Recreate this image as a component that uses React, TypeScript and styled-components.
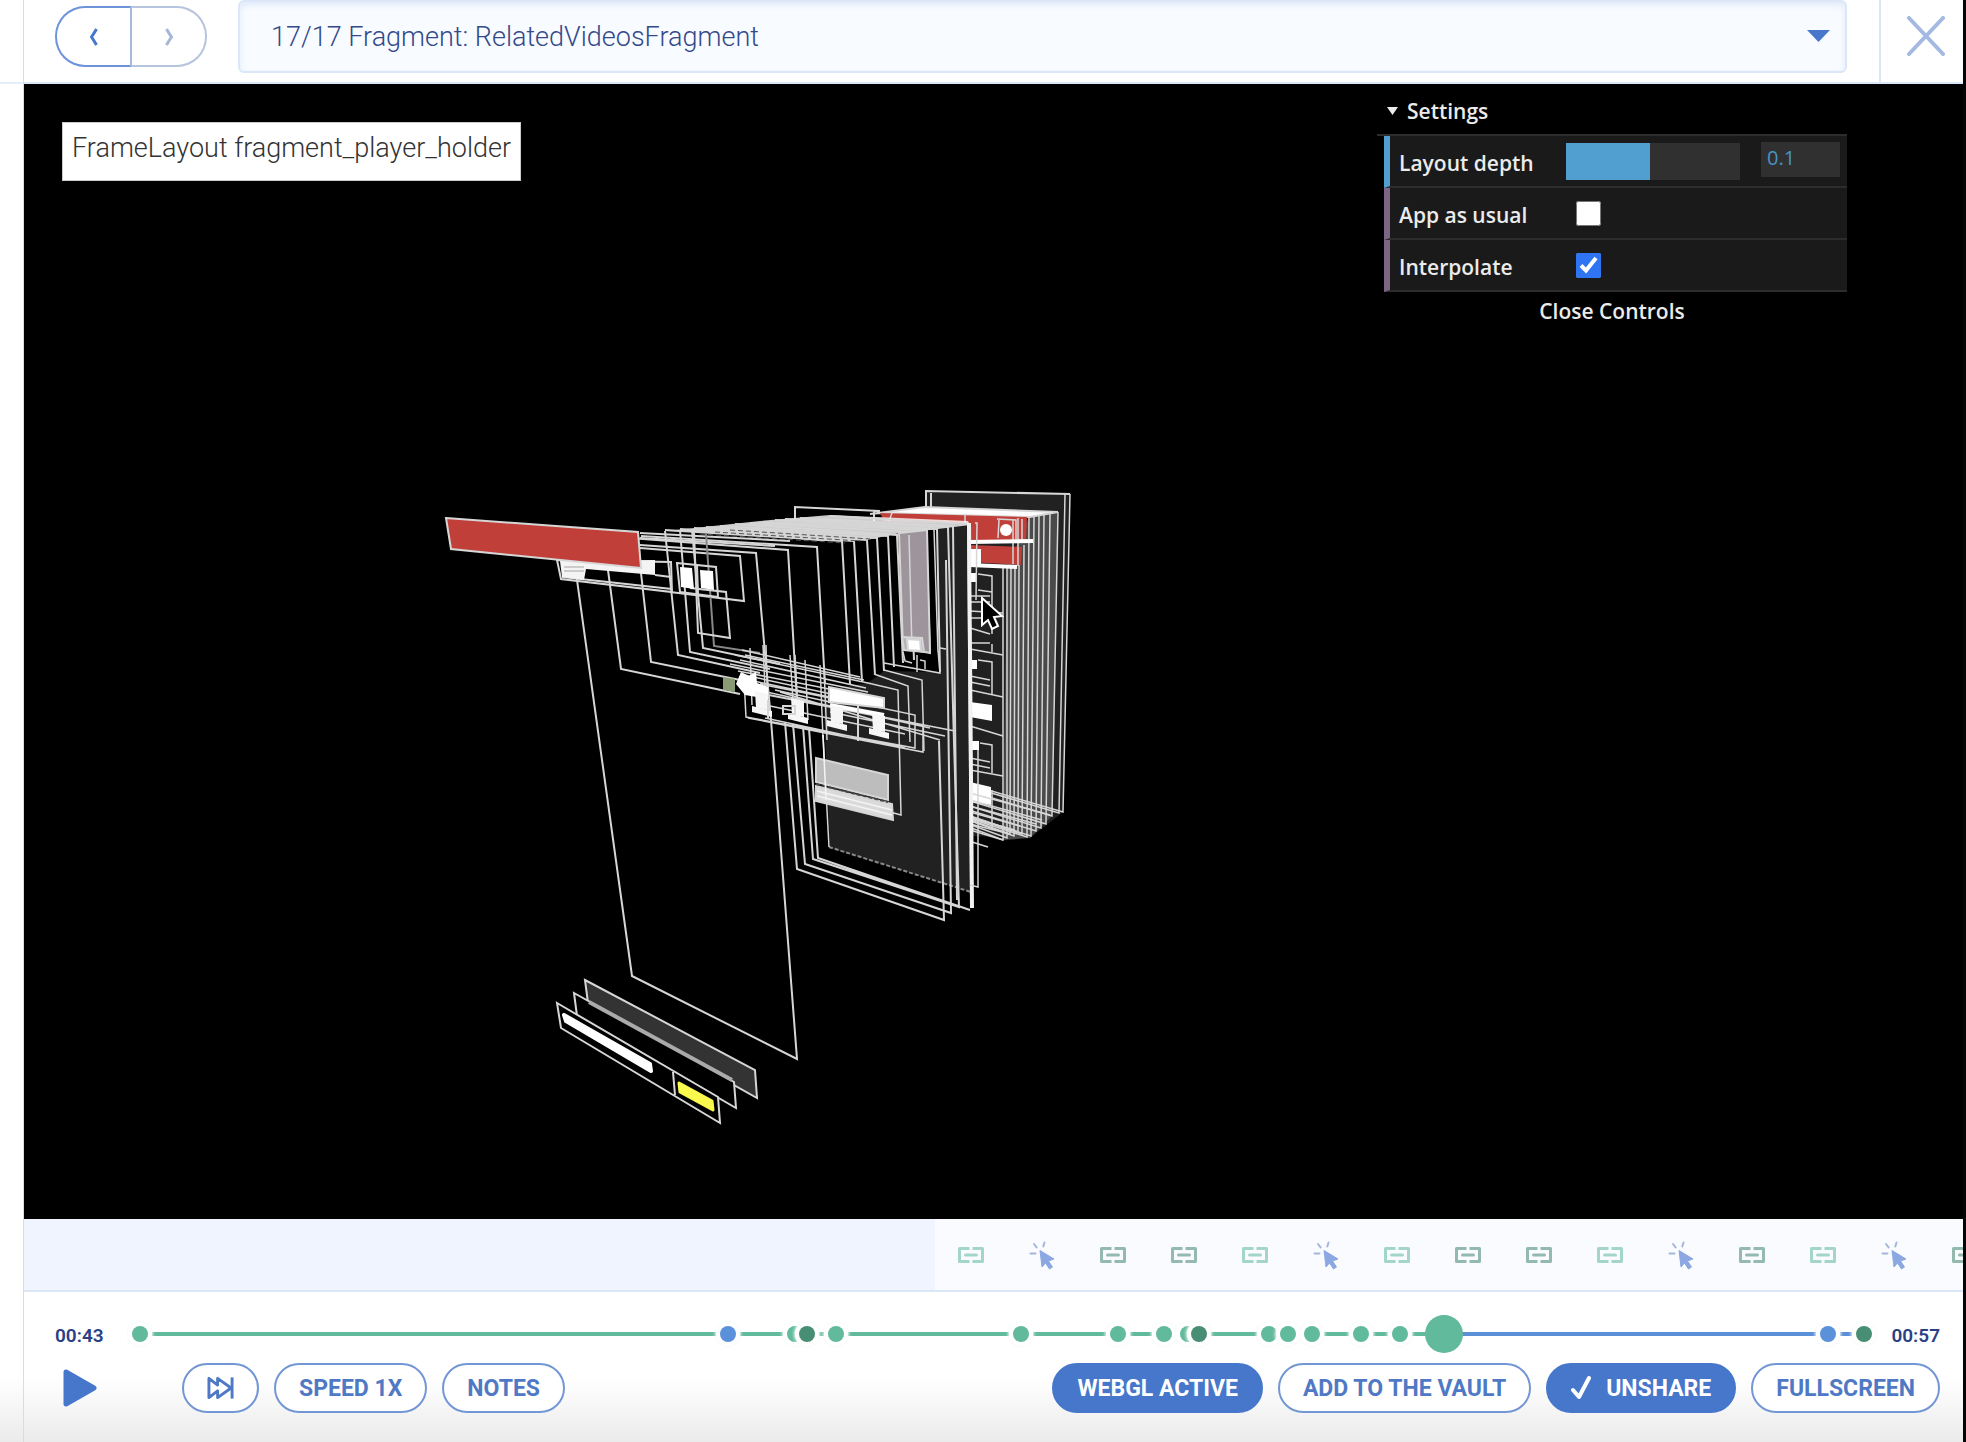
import React, { useState } from "react";
import styled, { createGlobalStyle } from "styled-components";

const blue = "#4677cb";
const green = "#61ba9b";
const darkGreen = "#478e75";
const line = "#dbe6f9";

const GlobalStyle = createGlobalStyle`
  *, *::before, *::after { box-sizing: border-box; }
  body { margin: 0; background: #fff; font-family: Roboto, "Liberation Sans", sans-serif; }
  button, input, select { font-family: inherit; }
`;

const Page = styled.div`
  display: flex;
  min-height: 100vh;
  background: linear-gradient(to top, #ebebeb, #ffffff 64px);
`;

const Rail = styled.aside`
  flex: 0 0 24px;
  border-right: 1px solid #cfdef6;
`;

const RailTop = styled.div`
  height: 84px;
  border-bottom: 2px solid #e6eefb;
`;

const Player = styled.main`
  flex: 1;
  min-width: 0;
  display: flex;
  flex-direction: column;
  overflow: hidden;
`;

const ScreenEdge = styled.div`
  flex: 0 0 3px;
  background: #050505;
`;

const Header = styled.header`
  display: flex;
  height: 84px;
  border-bottom: 2px solid ${line};
  padding-left: 31px;
`;

const Pager = styled.nav`
  display: flex;
  margin-top: 6px;
  height: 61px;
`;

const PagerButton = styled.button<{ $side: "left" | "right" }>`
  width: ${(p) => (p.$side === "left" ? 77 : 75)}px;
  padding: 0;
  background: #fff;
  display: flex;
  align-items: center;
  justify-content: center;
  border: 2px solid ${(p) => (p.$side === "left" ? "#6d93d8" : "#b6c4de")};
  color: ${(p) => (p.$side === "left" ? blue : "#a5b6d6")};
  border-radius: ${(p) => (p.$side === "left" ? "30px 0 0 30px" : "0 30px 30px 0")};
  ${(p) => (p.$side === "left" ? "border-right-color: #a9b9d8;" : "border-left: 0;")}
`;

const SelectBox = styled.div`
  position: relative;
  flex: 1;
  height: 73px;
  margin: 0 32px 0 31px;
`;

const ScreenSelect = styled.select`
  appearance: none;
  width: 100%;
  height: 100%;
  padding: 0 60px 0 31px;
  border: 2px solid ${line};
  border-radius: 6px;
  background: #f8fbff;
  box-shadow: inset 0 3px 6px #dfe9fa;
  color: #33498a;
  font-size: 27px;
  font-weight: 300;
`;

const SelectCaret = styled.svg`
  position: absolute;
  right: 17px;
  top: 30px;
  pointer-events: none;
`;

const CloseButton = styled.button`
  width: 84px;
  border: 0;
  border-left: 2px solid ${line};
  background: #fff;
  padding: 0 0 10px 8px;
  display: flex;
  align-items: center;
  justify-content: center;
  color: #a4b9e2;
`;

const Stage = styled.section`
  position: relative;
  flex: 1;
  min-height: 0;
  background: #000;
`;

const Scene = styled.svg`
  position: absolute;
  inset: 0;
  width: 100%;
  height: 100%;
`;

const NodeLabel = styled.div`
  position: absolute;
  left: 38px;
  top: 38px;
  height: 59px;
  padding: 8px 9px 0;
  background: #fff;
  border: 1px solid #ccc;
  color: #333;
  font-size: 27px;
  line-height: 34px;
  font-weight: 300;
  white-space: nowrap;
`;

const SettingsPanel = styled.section`
  position: absolute;
  right: 116px;
  top: 0;
  width: 470px;
  color: #ebebeb;
  font-family: "Open Sans", "Noto Sans", sans-serif;
  font-size: 21px;
  font-weight: 600;
`;

const SettingsTitle = styled.button`
  display: flex;
  align-items: center;
  gap: 9px;
  width: 100%;
  height: 52px;
  padding: 4px 0 0 10px;
  border: 0;
  border-bottom: 2px solid #2c2c2c;
  background: none;
  color: inherit;
  font-size: inherit;
  font-weight: inherit;
`;

const SettingsList = styled.div`
  margin-left: 7px;
`;

const SettingRow = styled.div<{ $accent: string }>`
  display: flex;
  align-items: center;
  height: 52px;
  padding: 0 7px 0 9px;
  border-left: 6px solid ${(p) => p.$accent};
  border-bottom: 2px solid #2c2c2c;
  background: #1a1a1a;
`;

const SettingLabel = styled.label`
  flex: 0 0 167px;
  padding-top: 4px;
  white-space: nowrap;
`;

const DepthSlider = styled.input`
  appearance: none;
  flex: 0 0 174px;
  height: 37px;
  margin: 0 21px 0 0;
  background: linear-gradient(to right, #509fd0 48%, #303030 48%);
  &::-webkit-slider-thumb { appearance: none; width: 1px; height: 37px; }
`;

const DepthValue = styled.input`
  flex: 1;
  min-width: 0;
  height: 35px;
  margin-bottom: 3px;
  padding: 0 6px 4px;
  border: 0;
  background: #303030;
  color: #4a93c4;
  font-size: 20px;
`;

const SettingCheck = styled.input`
  width: 25px;
  height: 25px;
  margin: 0 0 0 10px;
  accent-color: #2f74f2;
`;

const CloseControls = styled.button`
  width: 100%;
  height: 38px;
  padding: 0;
  border: 0;
  background: none;
  color: inherit;
  font-size: inherit;
  font-weight: inherit;
`;

const EventStrip = styled.div`
  display: flex;
  height: 73px;
  border-bottom: 2px solid ${line};
  background: #fafbff;
`;

const StripPlayed = styled.div`
  flex: 0 0 47%;
  background: #f0f4fe;
`;

const StripEvents = styled.ol`
  display: flex;
  flex: 1;
  min-width: 0;
  overflow: hidden;
  margin: 0;
  padding: 0;
  list-style: none;
`;

const StripEvent = styled.li`
  flex: 0 0 71px;
  display: flex;
  align-items: center;
  justify-content: center;
`;

const Controls = styled.footer`
  display: flex;
  flex-direction: column;
  gap: 10px;
  padding: 23px 23px 29px 31px;
`;

const TimeRow = styled.div`
  display: flex;
  align-items: center;
  height: 38px;
`;

const Time = styled.time`
  color: #2b3f86;
  font-size: 19px;
  font-weight: 600;
  padding-top: 2px;
`;

const Timeline = styled.div`
  position: relative;
  flex: 1;
  height: 38px;
  margin: 0 8px 0 17px;
`;

const Track = styled.div`
  position: absolute;
  top: 17px;
  left: 19px;
  right: 19px;
  height: 4px;
  background: #5b8fd8;
`;

const TrackPlayed = styled.div`
  height: 4px;
  background: ${green};
`;

const Marks = styled.div`
  position: absolute;
  inset: 0 19px;
`;

const Mark = styled.span<{ $color: string }>`
  position: absolute;
  top: 11px;
  width: 16px;
  height: 16px;
  margin-left: -8px;
  border-radius: 50%;
  background: ${(p) => p.$color};
  box-shadow: 0 0 0 4px #fff, 0 0 3px 5px #f7faf9;
`;

const Seek = styled.input`
  appearance: none;
  position: absolute;
  inset: 0;
  width: 100%;
  height: 38px;
  margin: 0;
  background: transparent;
  &::-webkit-slider-thumb {
    appearance: none;
    width: 38px;
    height: 38px;
    border-radius: 50%;
    background: ${green};
  }
`;

const ButtonRow = styled.div`
  display: flex;
  align-items: center;
  gap: 15px;
`;

const PlayButton = styled.button`
  width: 50px;
  height: 50px;
  margin-right: 62px;
  padding: 0;
  border: 0;
  background: none;
  display: flex;
  align-items: center;
  justify-content: center;
`;

const Pill = styled.button<{ $filled?: boolean }>`
  display: flex;
  align-items: center;
  gap: 14px;
  height: 50px;
  padding: 0 23px;
  border: 2px solid ${(p) => (p.$filled ? blue : "#7396d4")};
  border-radius: 25px;
  background: ${(p) => (p.$filled ? blue : "#fff")};
  color: ${(p) => (p.$filled ? "#fff" : "#4f79c4")};
  font-size: 23px;
  font-weight: 700;
  white-space: nowrap;
`;

const Spacer = styled.div`
  flex: 1;
`;

const marks: [number, string][] = [
  [0, green],
  [34.1, "#5b90da"],
  [38, green],
  [38.7, darkGreen],
  [40.4, green],
  [51.1, green],
  [56.7, green],
  [59.4, green],
  [60.8, green],
  [61.4, darkGreen],
  [65.5, green],
  [66.6, green],
  [68, green],
  [70.8, green],
  [73.1, green],
  [97.9, "#5b90da"],
  [100, darkGreen],
];

type EventKind = "light" | "dark" | "tap";
const events: EventKind[] = [
  "light", "tap", "dark", "dark", "light", "tap", "light", "dark",
  "dark", "light", "tap", "dark", "light", "tap", "dark",
];

function EventIcon({ kind }: { kind: EventKind }) {
  if (kind === "tap") {
    return (
      <svg width="28" height="30" viewBox="0 0 28 30" aria-label="Tap">
        <path d="M2.500 13.500h5M6 4l2.600 3.400M16.500 2.500l-1.200 4" stroke="#a5b6dc" strokeWidth="2" strokeLinecap="round" />
        <path d="M12 10.500l14 8.500-5.500 2 4 6-3 2-4-6-3.500 4z" fill="#8ba8e2" stroke="#8ba8e2" strokeLinejoin="round" />
      </svg>
    );
  }
  const color = kind === "light" ? "#a3d6c6" : "#94bab0";
  return (
    <svg width="28" height="18" viewBox="0 0 28 18" fill="none" stroke={color} strokeWidth="3" aria-label="Screen">
      <path d="M12.500 2.500H2.500v13h10M15.500 2.500h10v13h-10" strokeLinejoin="round" />
      <path d="M8.500 9h11" strokeLinecap="round" />
    </svg>
  );
}

/* Top edge and right edge of the receding view frames, front to back. */
const frames = [
  "604,536 788,550 797,702",
  "641,536 817,547 825,684",
  "665,530 842,541 850,684",
  "680,529 854,541 862,681",
  "694,528 867,540 875,675",
  "706,527 877,538 884,671",
  "720,526 888,536 894,667",
  "735,524 897,535 903,663",
  "750,523 909,532 914,660",
  "762,522 926,530 930,654",
  "775,520 937,529 940,672",
  "785,519 948,527 954,742",
  "800,518 953,526 957,900",
  "830,516 968,524 971,892",
];

const deep = [
  [1003, 568, 1003, 840],
  [1007, 567, 1007, 838],
  [1011, 566, 1010, 834],
  [1015, 566, 1014, 836],
  [1019, 565, 1018, 832],
  [1024, 545, 1022, 834],
  [1029, 518, 1027, 837],
  [1034, 517, 1031, 836],
  [1039, 516, 1036, 831],
  [1044, 515, 1041, 828],
  [1050, 514, 1046, 824],
  [1058, 512, 1052, 816],
  [1065, 494, 1059, 813],
  [1070, 494, 1063, 812],
];

const people = [
  [762, 702],
  [798, 709],
  [837, 716],
  [879, 724],
];

function LayoutScene() {
  return (
    <Scene viewBox="24 84 1939 1135" fill="none" stroke="#d6d6d6" strokeWidth="2" aria-label="Exploded view of the layout layers">
      {/* rear stack */}
      <path d="M926 510V491L1070 494L1063 812L1030 838L972 836V512z" fill="#212121" stroke="none" />
      <path d="M926 510V491L1070 494M931 493V510" />
      <path d="M1007 567L1029 518L1058 512L1052 816L1030 838L1003 840z" fill="#4a4a4a" stroke="none" />
      {deep.map(([x1, y1, x2, y2], i) => (
        <path key={i} strokeWidth="1.500" d={`M${x1} ${y1}L${x2} ${y2}L972 ${y2 - 4 - (x2 - 972) / 4}`} />
      ))}
      <path d="M795 520V507L880 511M874 511V522" />
      <path d="M870 514L925 507L1058 512L1030 517L880 513z" fill="#fff" />
      <path d="M880 513L1027 517L1026 541L969 540L967 524L884 521z" fill="#c03f38" stroke="none" />
      <path d="M969 545L1022 547L1021 565L969 562z" fill="#c03f38" stroke="none" />
      <path strokeWidth="1.500" d="M892 513l-3 8M965 514v10M1013 520v44M1018 518v48M1022 519v22" />
      <path d="M969 542L1033 541M969 565L1017 567" strokeWidth="4" stroke="#fff" />
      <path d="M997 519L1016 520V540M999 520L998 538" strokeWidth="1.500" />
      <circle cx="1006" cy="530" r="6" fill="#fff" stroke="none" />
      <path d="M970 549h11v15h-11zM969 573h8v9h-8zM969 660h8v9h-8zM970 702l22 3v16l-22-4zM970 741h9v9h-9zM970 782l21 5v18l-21-3z" fill="#fff" stroke="none" />
      <path strokeWidth="1.500" d="M978 574L992 576V634M978 590L992 592M970 596h20M970 602h20M970 611L1003 613M970 618h20M970 628L990 634M992 644V652M970 643h20M970 649L1003 655M978 660L992 662V694M970 676L990 680M970 682L990 686M970 690L1003 697M970 726L1003 736M980 743L992 745V773M970 758L990 762M970 764L990 768M970 770L1003 776M992 790V830" />
      <path strokeWidth="1.500" d="M970 793L1050 815M970 800L1042 820M970 806L1036 824M970 812L1020 826M970 818L1015 830M970 824L1010 834M970 830L1003 840M972 842L988 847" />

      {/* central panel */}
      <path d="M937 529L968 524L971 892L830 848L823 690L868 683L884 671L940 672z" fill="#212121" stroke="none" />
      <path d="M829 847L971 892" strokeDasharray="4 2" stroke="#888" />
      <path d="M666 531L760 521L830 515L968 521L970 525L930 530L900 533L867 540L817 541L750 534z" fill="#fff" fillOpacity="0.8" stroke="none" />
      {frames.map((points) => (
        <polyline key={points} points={points} />
      ))}
      <path d="M700 534L845 543M715 532L860 541M730 530L870 539" stroke="#555" strokeWidth="1" strokeDasharray="5 3" />
      <path d="M899 533L927 530L930 653L903 648z" fill="#9d959b" />
      <path d="M909 535L912 650" strokeWidth="1.500" />
      <path d="M902 637l20 1 2 14-20-2z" fill="#b8b2b6" />
      <path d="M907 639l13 1 1 11-13-1z" fill="#fff" />
      <path d="M930 527L934 529L938 652M940 648L946 649M884 663L940 673L938 650M903 652L905 661L912 663M917 655L917 672M920 660L925 661L925 669" strokeWidth="1.500" />
      <path d="M969 523L972 908" stroke="#f2f2f2" strokeWidth="4" />
      <path d="M975 523L977 523L976 600M978 750V887L970 885" strokeWidth="1.500" />

      {/* left frames */}
      <path d="M574 548L577 580L632 976L797 1059L771 720L756 553L640 545" />
      <path d="M640 533L790 541M640 538L775 546M640 548L740 556L744 601L670 592" />
      <path d="M608 570L621 669L740 694M641 573L651 662L745 681M665 531L678 655L760 673M680 530L690 652L770 669M692 530L703 648L780 664" />
      <path d="M706 534L714 646L760 653" stroke="#888" />
      <path d="M694 532L698 633L730 638L726 592L690 588" />
      <path d="M677 563L716 567L718 597L680 592zM697 565L698 594" />
      <path d="M680 567l12 1 2 21-13-2zM700 570l13 1 1 19-13-2z" fill="#fff" stroke="none" />
      <path d="M557 560L671 562L672 592L561 579z" />
      <path d="M562 577L672 589M655 575L671 577" />
      <path d="M560 561L655 560V575L586 569L584 580L562 577z" fill="#f4f4f4" stroke="none" />
      <path d="M564 567h20M564 571h20" stroke="#ccc" />
      <path d="M446 518L638 532L641 568L451 549z" fill="#c03f38" />

      {/* player details in the middle */}
      <path strokeWidth="1.500" d="M735 655L868 683M740 660L866 688M745 655L864 680M730 664L868 692M738 671L870 697M742 650L860 677M744 675L868 702M750 648L752 705M763 645L766 710M766 645L768 712M790 655L794 716M795 655L798 712M805 660L808 720M820 665L823 738M824 668L827 740M868 683L898 690L901 815L890 812M874 674L908 686L910 742M884 670L922 680L924 751" />
      <path strokeWidth="1.500" d="M744 679L915 715V748L746 717zM742 690L923 725V752L748 718M748 688L930 728M770 695L955 731M780 692L940 740M830 712L945 736M770 706L905 734M765 718L905 748M775 690L830 702M760 684L830 698" />
      <path d="M723 677l12 2v13l-12-2z" fill="#8a9a74" stroke="none" />
      <path d="M736 684L741 672L749 676L756 672L757 683L768 687L768 699L745 695z" fill="#fff" stroke="none" />
      <path d="M829 687L884 698V708L829 702z" fill="#fff" />
      <path d="M830 705L884 715" stroke="#fff" strokeWidth="4" />
      {people.map(([x, y]) => (
        <g key={x} stroke="none" fill="#f6f6f6">
          <path d={`M${x - 7} ${y - 11}l13 3v16l-12-2z`} />
          <path d={`M${x - 10} ${y + 4}l20 5v6l-20-5z`} />
        </g>
      ))}
      <path d="M783 706h12v8h-12zM858 706V741M768 700V718" />

      {/* stacked lower frames */}
      <path d="M785 722L797 869L944 920L939 741M793 724L805 864L951 913L946 560M803 726L813 859L959 907L954 742M809 728L818 858L970 910" />
      <path d="M823 735L829 847" strokeWidth="1.500" />
      <path d="M816 758L888 775V800L816 782z" fill="#bdbdbd" />
      <path d="M816 786L892 804L893 820L816 801z" fill="#dadada" />
      <path d="M816 784L888 802" stroke="#444" strokeDasharray="4 2" />
      <path d="M817 791L892 810M817 796L892 815M823 735L826 800" stroke="#f4f4f4" strokeWidth="1.500" />

      {/* bottom bars */}
      <path d="M585 980L755 1070L757 1098L588 1003z" fill="#333" />
      <path d="M574 993L734 1082L736 1108L577 1016z" fill="#000" />
      <path d="M589 1002L732 1080" strokeWidth="4" stroke="#aaa" />
      <path d="M557 1003L718 1097L720 1123L561 1028zM673 1072L675 1095" fill="#000" />
      <path d="M564 1015L650 1064L651 1071L566 1021z" fill="#fff" stroke="#fff" strokeWidth="4" strokeLinejoin="round" />
      <path d="M679 1083L712 1101L713 1110L680 1092z" fill="#f9f94e" stroke="#f9f94e" strokeWidth="3" strokeLinejoin="round" />

      {/* pointer */}
      <path d="M982 598V625L988 620L992 629L998 626L994 617L1002 616z" fill="#000" stroke="#fff" strokeWidth="2" />
    </Scene>
  );
}

export default function App() {
  const [depth, setDepth] = useState(0.48);
  const [usual, setUsual] = useState(false);
  const [interpolate, setInterpolate] = useState(true);
  const [position, setPosition] = useState(75.6);

  return (
    <Page>
      <GlobalStyle />
      <Rail>
        <RailTop />
      </Rail>
      <Player>
        <Header>
          <Pager>
            <PagerButton $side="left" aria-label="Previous screen">
              <svg width="10" height="18" viewBox="0 0 10 18" fill="none" stroke="currentColor" strokeWidth="3">
                <path d="M7.500 1Q5.500 4.500 2.500 9Q5.500 13.500 7.500 17" />
              </svg>
            </PagerButton>
            <PagerButton $side="right" aria-label="Next screen">
              <svg width="10" height="18" viewBox="0 0 10 18" fill="none" stroke="currentColor" strokeWidth="3">
                <path d="M2.500 1Q4.500 4.500 7.500 9Q4.500 13.500 2.500 17" />
              </svg>
            </PagerButton>
          </Pager>
          <SelectBox>
            <ScreenSelect aria-label="Screen">
              <option>17/17 Fragment: RelatedVideosFragment</option>
            </ScreenSelect>
            <SelectCaret width="23" height="12" viewBox="0 0 23 12">
              <path d="M0 0h23L11.500 12z" fill={blue} />
            </SelectCaret>
          </SelectBox>
          <CloseButton aria-label="Close">
            <svg width="40" height="40" viewBox="0 0 40 40" stroke="currentColor" strokeWidth="4" strokeLinecap="round">
              <path d="M3 2l34 36M37 2L3 38" />
            </svg>
          </CloseButton>
        </Header>

        <Stage>
          <LayoutScene />
          <NodeLabel>FrameLayout fragment_player_holder</NodeLabel>
          <SettingsPanel>
            <SettingsTitle>
              <svg width="11" height="8" viewBox="0 0 11 8">
                <path d="M0 0h11L5.500 8z" fill="#ebebeb" />
              </svg>
              Settings
            </SettingsTitle>
            <SettingsList>
              <SettingRow $accent="#509fd0">
                <SettingLabel htmlFor="depth">Layout depth</SettingLabel>
                <DepthSlider
                  id="depth"
                  type="range"
                  min={0}
                  max={1}
                  step={0.01}
                  value={depth}
                  onChange={(e) => setDepth(Number(e.target.value))}
                />
                <DepthValue aria-label="Layout depth value" defaultValue="0.1" />
              </SettingRow>
              <SettingRow $accent="#7d6685">
                <SettingLabel htmlFor="usual">App as usual</SettingLabel>
                <SettingCheck id="usual" type="checkbox" checked={usual} onChange={() => setUsual(!usual)} />
              </SettingRow>
              <SettingRow $accent="#7d6685">
                <SettingLabel htmlFor="interpolate">Interpolate</SettingLabel>
                <SettingCheck
                  id="interpolate"
                  type="checkbox"
                  checked={interpolate}
                  onChange={() => setInterpolate(!interpolate)}
                />
              </SettingRow>
            </SettingsList>
            <CloseControls>Close Controls</CloseControls>
          </SettingsPanel>
        </Stage>

        <EventStrip>
          <StripPlayed />
          <StripEvents>
            {events.map((kind, i) => (
              <StripEvent key={i}>
                <EventIcon kind={kind} />
              </StripEvent>
            ))}
          </StripEvents>
        </EventStrip>

        <Controls>
          <TimeRow>
            <Time>00:43</Time>
            <Timeline>
              <Track>
                <TrackPlayed style={{ width: `${position}%` }} />
              </Track>
              <Marks>
                {marks.map(([at, color]) => (
                  <Mark key={at} $color={color} style={{ left: `${at}%` }} />
                ))}
              </Marks>
              <Seek
                type="range"
                aria-label="Seek"
                min={0}
                max={100}
                step={0.1}
                value={position}
                onChange={(e) => setPosition(Number(e.target.value))}
              />
            </Timeline>
            <Time>00:57</Time>
          </TimeRow>
          <ButtonRow>
            <PlayButton aria-label="Play">
              <svg width="34" height="40" viewBox="0 0 34 40">
                <path d="M3 4L31 20L3 36z" fill={blue} stroke={blue} strokeWidth="5" strokeLinejoin="round" />
              </svg>
            </PlayButton>
            <Pill aria-label="Skip forward">
              <svg width="27" height="24" viewBox="0 0 28 24" fill="none" stroke="#4f79c4" strokeWidth="3" strokeLinejoin="round">
                <path d="M2 2v20l9-7v7l14-10L11 2v7z" />
                <path d="M26 1v22" />
              </svg>
            </Pill>
            <Pill>SPEED 1X</Pill>
            <Pill>NOTES</Pill>
            <Spacer />
            <Pill $filled>WEBGL ACTIVE</Pill>
            <Pill>ADD TO THE VAULT</Pill>
            <Pill $filled>
              <svg width="21" height="24" viewBox="0 0 21 24" fill="none" stroke="#fff" strokeWidth="4" strokeLinecap="round" strokeLinejoin="round">
                <path d="M2 14l6 7L18 2" />
              </svg>
              UNSHARE
            </Pill>
            <Pill>FULLSCREEN</Pill>
          </ButtonRow>
        </Controls>
      </Player>
      <ScreenEdge />
    </Page>
  );
}
